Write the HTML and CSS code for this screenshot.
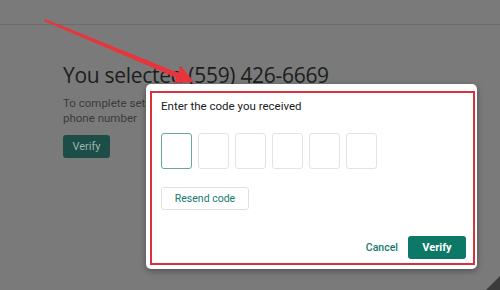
FILE: index.html
```html
<!DOCTYPE html>
<html>
<head>
<meta charset="utf-8">
<link rel="stylesheet" href="styles.css">
</head>
<body>
<div class="page">
  <header class="topbar"></header>
  <main class="main">
    <h1 class="title">You selected (559) 426-6669</h1>
    <p class="desc">To complete setup, verify your<br>phone number</p>
    <button class="btn-dark">Verify</button>
  </main>

  <div class="dialog">
    <div class="annot">
      <div class="dlg-title">Enter the code you received</div>
      <div class="codes">
        <span class="code active"></span>
        <span class="code"></span>
        <span class="code"></span>
        <span class="code"></span>
        <span class="code"></span>
        <span class="code"></span>
      </div>
      <button class="resend">Resend code</button>
      <div class="footer">
        <button class="cancel">Cancel</button>
        <button class="verify">Verify</button>
      </div>
    </div>
  </div>

  <svg class="arrow" width="500" height="290" viewBox="0 0 500 290">
    <polygon points="45,19 180,73.5 178,78.5 44,21" fill="#e8343c"/>
    <polygon points="194,82 174,83 181,66" fill="#e8343c"/>
    <polygon points="486,290 500,276 500,290" fill="#3b3b3b"/>
  </svg>
</div>
</body>
</html>
```

FILE: styles.css
```css
* { box-sizing: border-box; }
html, body { margin: 0; padding: 0; }
body {
  width: 500px;
  height: 290px;
  overflow: hidden;
  background: #7a7a7a;
  font-family: Roboto, "Liberation Sans", sans-serif;
}
.page {
  position: relative;
  width: 500px;
  height: 290px;
}
.topbar {
  height: 25px;
  border-bottom: 1px solid #6c6c6c;
}
.main {
  padding-left: 63px;
  padding-top: 37px;
}
.title {
  margin: 0;
  font-family: "Open Sans", Roboto, sans-serif;
  font-weight: 400;
  font-size: 21px;
  line-height: 27px;
  color: #1d1d1d;
  letter-spacing: -0.3px;
}
.desc {
  margin: 7px 0 0;
  font-size: 11.5px;
  line-height: 15px;
  color: #3b3b3b;
}
.btn-dark {
  margin-top: 9px;
  width: 47px;
  height: 23px;
  border: none;
  border-radius: 3px;
  background: #1c4e47;
  color: #9db4af;
  font-family: Roboto, sans-serif;
  font-size: 11px;
  padding: 0;
}
.dialog {
  position: absolute;
  left: 146px;
  top: 84px;
  width: 331px;
  height: 185px;
  background: #fff;
  border-radius: 5px;
  box-shadow: 0 2px 6px rgba(0,0,0,0.35);
  padding: 7px 2px 4px 4px;
}
.annot {
  height: 100%;
  border: 2px solid #d8333b;
  padding: 6px 7px 4px 9px;
  display: flex;
  flex-direction: column;
  align-items: flex-start;
}
.dlg-title {
  font-size: 11.5px;
  line-height: 15px;
  color: #202124;
}
.codes {
  display: flex;
  gap: 6px;
  margin-top: 19px;
}
.code {
  width: 31px;
  height: 36px;
  border: 1px solid #e3e3e3;
  border-radius: 3px;
}
.code.active {
  border-color: #6aa6a0;
}
.resend {
  margin-top: 18px;
  width: 88px;
  height: 23px;
  border: 1px solid #e0e0e0;
  border-radius: 3px;
  background: #fff;
  color: #16786c;
  font-family: Roboto, sans-serif;
  font-size: 10.5px;
  padding: 0;
}
.footer {
  margin-top: auto;
  align-self: stretch;
  display: flex;
  justify-content: flex-end;
  align-items: center;
  gap: 10px;
}
.cancel {
  border: none;
  background: none;
  color: #16786c;
  font-family: Roboto, sans-serif;
  font-size: 10.5px;
  font-weight: 500;
  padding: 0;
}
.verify {
  width: 58px;
  height: 23px;
  border: none;
  border-radius: 3px;
  background: #0e7866;
  color: #fff;
  font-family: Roboto, sans-serif;
  font-size: 11px;
  font-weight: 700;
  padding: 0;
}
.arrow {
  position: absolute;
  left: 0;
  top: 0;
  pointer-events: none;
}
```
